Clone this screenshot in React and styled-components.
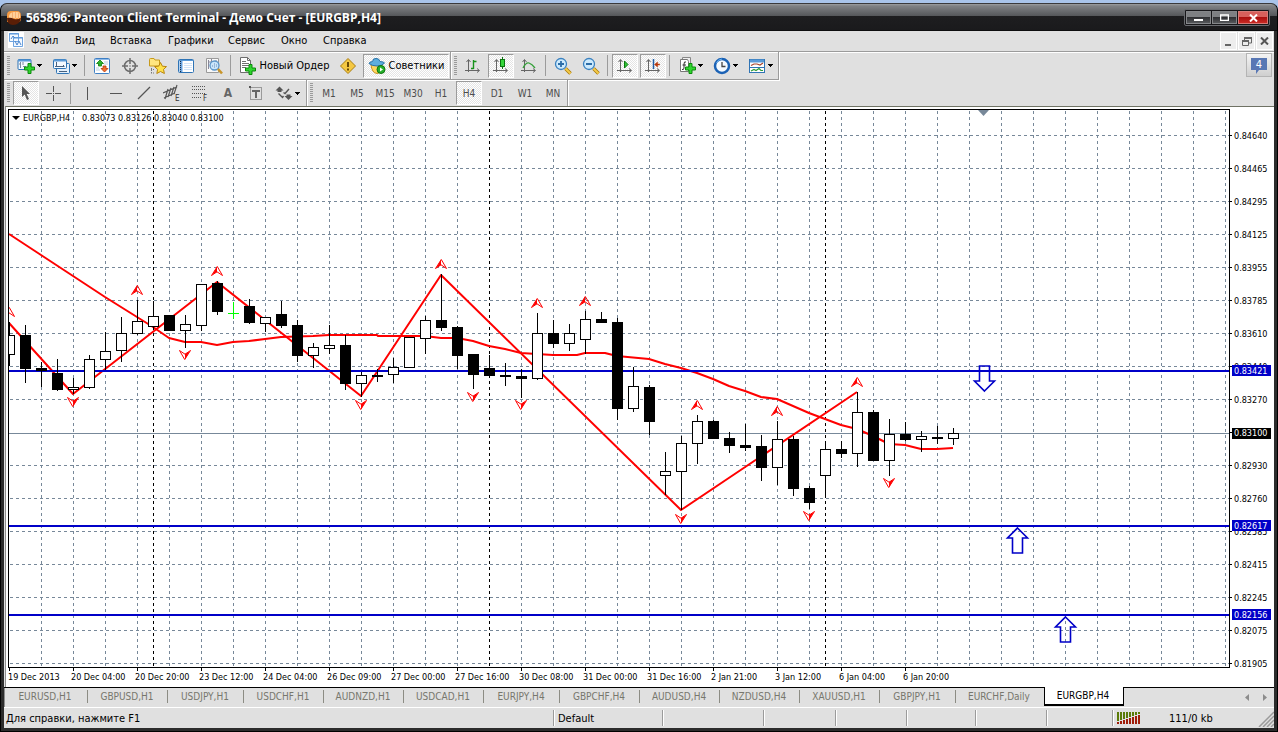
import React from "react";
import styled, { createGlobalStyle, css } from "styled-components";

const Global = createGlobalStyle`
  * { box-sizing: border-box; }
  body {
    margin: 0;
    background: #a9c4ea;
    font-family: "DejaVu Sans Condensed", "DejaVu Sans", sans-serif;
    font-size: 11px;
    color: #000;
  }
  button { font: inherit; color: inherit; padding: 0; margin: 0; border: 0; background: none; }
  svg { display: block; flex: none; }
`;

/* ---------- window frame ---------- */

const Window = styled.div`
  display: flex;
  flex-direction: column;
  min-height: 100vh;
  padding-top: 3px;
`;

const Frame = styled.div`
  flex: 1;
  display: flex;
  flex-direction: column;
  border: 1px solid #000;
  border-top-color: #3a3a3c;
  border-radius: 7px 7px 0 0;
  background: #2c2c2c;
  overflow: hidden;
`;

const TitleBar = styled.header`
  display: flex;
  align-items: center;
  height: 27px;
  padding: 0 7px 0 5px;
  gap: 4px;
  background: linear-gradient(#9c9ea0 0, #7f8184 2px, #55575a 12px, #1e1e20 12px, #1a1a1c 26px, #000 27px);
`;

const Title = styled.h1`
  flex: 1;
  margin: 0;
  font: bold 12px/16px "Open Sans", "Noto Sans", sans-serif;
  color: #fff;
  white-space: nowrap;
`;

const CaptionGroup = styled.div`
  display: flex;
  gap: 1px;
  padding: 1px;
  background: #17171a;
  border: 1px solid #6a6c70;
  border-radius: 2px;
`;

const CaptionButton = styled.button`
  display: grid;
  place-items: center;
  width: ${(p) => (p.$close ? 30 : 25)}px;
  height: 13px;
  border: 1px solid ${(p) => (p.$close ? "#d87a76" : "#85878a")};
  background: ${(p) =>
    p.$close
      ? "linear-gradient(#d8605c 0 45%, #a80d0d 45%, #c82a24)"
      : "linear-gradient(#7e8083 0 45%, #2c2d30 45%, #55575a)"};
`;

const Client = styled.div`
  flex: 1;
  display: flex;
  flex-direction: column;
  margin: 0 3px 3px;
  background: #e0e0e0;
`;

/* ---------- menu ---------- */

const MenuBar = styled.nav`
  display: flex;
  align-items: center;
  height: 20px;
  padding: 0 1px 0 4px;
`;

const MenuItem = styled.button`
  width: ${(p) => p.$w}px;
  height: 20px;
  line-height: 20px;
  text-align: left;
  white-space: nowrap;
`;

const MenuSpacer = styled.div`
  flex: 1;
`;

const ChildButton = styled.button`
  display: grid;
  place-items: center;
  width: 17px;
  height: 18px;
  margin-left: 1px;
  border: 1px solid #fff;
  background: #ededed;
`;

/* ---------- toolbars ---------- */

const ToolRow = styled.div`
  display: flex;
  justify-content: space-between;
  height: ${(p) => p.$h}px;
  ${(p) => p.$top && css`border-top: 1px solid #9b9b9b; box-shadow: inset 0 1px #fff;`}
`;

const Bars = styled.div`
  display: flex;
`;

const Bar = styled.div`
  display: flex;
  align-items: center;
  padding-right: ${(p) => p.$end}px;
  border-right: 1px solid #9b9b9b;
  border-bottom: ${(p) => (p.$line ? "1px solid #9b9b9b" : "0")};
  box-shadow: 1px 1px #fff;
`;

const Grip = styled.span`
  width: 3px;
  height: 20px;
  margin: 0 2px 0 3px;
  background: repeating-linear-gradient(#9a9a9a 0 1px, #e0e0e0 1px 2px);
`;

const Divider = styled.span`
  width: 1px;
  height: 21px;
  margin: 0 3px 0 2px;
  background: #9b9b9b;
`;

const pressed = css`
  border: 1px solid;
  border-color: #9b9b9b #fff #fff #9b9b9b;
  background: repeating-conic-gradient(#fff 0 25%, #e4e4e4 0 50%) 0 0 / 2px 2px;
`;

const ToolButton = styled.button`
  display: flex;
  align-items: center;
  justify-content: center;
  gap: ${(p) => p.$gap || 3}px;
  width: ${(p) => p.$w || 26}px;
  height: 24px;
  margin: 0 1px;
  white-space: nowrap;
  ${(p) => p.$on && pressed}
`;

const PeriodButton = styled(ToolButton)`
  font-size: 10px;
  color: #4c4c4c;
`;

const NewsButton = styled.button`
  display: grid;
  place-items: center;
  width: 26px;
  height: 24px;
  margin: 1px 2px 0 0;
  border: 1px solid #b4b4b4;
  background: linear-gradient(#f4f4f4, #cfcfcf);
`;

/* ---------- chart ---------- */

const ChartPane = styled.main`
  flex: 1;
  display: grid;
  grid-template-columns: minmax(0, 1fr) 44px;
  grid-template-rows: 559px auto;
  padding: 2px 0 0 2px;
  margin-left: 1px;
  border-top: 1px solid #6f7264;
  border-left: 1px solid #8d8d8d;
  background: #fff;
`;

const PlotSvg = styled.svg`
  width: 100%;
  height: 559px;
`;

const ScaleSvg = styled.svg`
  width: 44px;
  height: 559px;
  overflow: visible;
`;

const DateSvg = styled.svg`
  width: 100%;
  height: 19px;
  overflow: visible;
`;

/* ---------- tabs ---------- */

const TabBar = styled.div`
  display: flex;
  align-items: flex-start;
  height: 21px;
  border-top: 1px solid #000;
  border-bottom: 1px solid #fff;
  box-shadow: inset 1px 0 #8d8d8d;
`;

const Tab = styled.button`
  position: relative;
  width: ${(p) => p.$w}px;
  height: 17px;
  padding-right: 2px;
  line-height: 17px;
  font-size: 10px;
  color: #77776d;
  text-align: center;
  white-space: nowrap;
  ${(p) =>
    p.$active
      ? css`
          height: 19px;
          margin-top: -1px;
          background: #fff;
          color: #000;
          border: solid #000;
          border-width: 0 1px 2px 1px;
        `
      : css`
          background: linear-gradient(#8c8c84, #8c8c84) right center / ${p.$last ? 0 : 1}px 13px no-repeat;
        `}
`;

const TabArrows = styled.div`
  display: flex;
  gap: 12px;
  margin-left: auto;
  padding: 6px 7px 0 0;
`;

const ArrowButton = styled.button`
  display: block;
  width: 5px;
  height: 7px;
`;

/* ---------- status ---------- */

const StatusBar = styled.footer`
  display: flex;
  align-items: center;
  height: 20px;
`;

const StatusCell = styled.div`
  display: flex;
  align-items: center;
  gap: 28px;
  height: 16px;
  padding-left: ${(p) => (p.$first ? 2 : 4)}px;
  white-space: nowrap;
  ${(p) => (p.$grow ? "flex: 1;" : `width: ${p.$w}px;`)}
  ${(p) => !p.$first && css`border-left: 1px solid #9b9b9b; box-shadow: inset 1px 0 #fff;`}
`;

/* ---------- icons ---------- */

const Icon = ({ w = 18, h = 18, children }) => (
  <svg width={w} height={h} viewBox={`0 0 ${w} ${h}`} aria-hidden="true">
    {children}
  </svg>
);

const Caret = () => (
  <svg width="5" height="3" viewBox="0 0 5 3" shapeRendering="crispEdges">
    <path d="M0 0h5L2.500 3z" fill="#000" />
  </svg>
);

const Plus = ({ x, y }) => (
  <path
    transform={`translate(${x} ${y})`}
    d="M4 .5h3V4h3.500v3H7v3.500H4V7H.5V4H4z"
    fill="#2fd52f"
    stroke="#0a8a0a"
  />
);

const Axes = () => (
  <path d="M4.500 3v12M1 13.500h14M2.500 5l2-2.500 2 2.500M13 11.500l2.500 2-2.500 2" fill="none" stroke="#666" />
);

const icons = {
  app: (
    <Icon w={16} h={16}>
      <path d="M1 9V5q0-4 4-4h6q4 0 4 5v3q0 3-3 3H1z" fill="#f79a40" />
      <path d="M3 6Q4 2 8 2h3q3 0 3 3v3H3z" fill="#ffd09a" />
      <path d="M6.500 2v7M9.500 2v7M12.500 3v6" stroke="#f8b070" />
      <path d="M1 8q4-1 7 1 3 1 7-1-1 7-8 7-6 0-6-7z" fill="#5a1e06" />
    </Icon>
  ),
  doc: (
    <Icon w={16} h={16}>
      <path fill="#fff" d="M0 0h16v16H0z" />
      <path d="M1.500 1.500h9v8h-9zM5.500 5.500h9v9h-9z" fill="#f4f9ff" stroke="#6fa4e0" />
      <path d="M1 2h10M5 6h10" stroke="#5a96da" />
      <path d="M3 7l2-3 2 2M7 9l2 4 2-4 2 4" fill="none" stroke="#4a86d0" />
    </Icon>
  ),
  newChart: (
    <Icon>
      <rect x="1" y="2.500" width="13" height="10" rx="1" fill="#f4f9ff" stroke="#2f74b5" />
      <path d="M1 3.500h13" stroke="#5a9ad8" strokeWidth="2" />
      <path d="M3.500 5v6M2 7h2M6 9.500h3M6 5v3" stroke="#7a8aa0" />
      <Plus x={7} y={6} />
    </Icon>
  ),
  profiles: (
    <Icon>
      <rect x="4.500" y="6.500" width="13" height="10" rx="1" fill="#e4f0fc" stroke="#2f74b5" />
      <rect x="1.500" y="2.500" width="13" height="9" rx="1" fill="#f4f9ff" stroke="#2f74b5" />
      <path d="M2 3.500h12" stroke="#5a9ad8" strokeWidth="2" />
      <path d="M4.500 5v5M3 9.500h9M11 8l1.500 1.500M7 14.500h8" fill="none" stroke="#47617e" />
    </Icon>
  ),
  market: (
    <Icon>
      <rect x="1.500" y="1.500" width="15" height="15" rx="1" fill="#fff" stroke="#3d7fc4" />
      <path d="M2 2.500h14" stroke="#8db9e8" />
      <path d="M7 3L3.500 6.500H5.500V9h3V6.500h2z" fill="#2db52d" stroke="#0b7c0b" strokeWidth=".8" />
      <path d="M11.500 15L8 11.500h2V9h3v2.500h2z" fill="#f07030" stroke="#b83a0a" strokeWidth=".8" />
      <path d="M11 5h4M11 7h4M3 11h3M3 13h4" stroke="#b9cfe4" />
    </Icon>
  ),
  crosshair: (
    <Icon>
      <circle cx="9" cy="9" r="5.500" fill="none" stroke="#6c6c6c" strokeWidth="1.500" />
      <path d="M9 1v6M9 11v6M1 9h6M11 9h6M9 8.500v1" stroke="#6c6c6c" strokeWidth="1.500" />
    </Icon>
  ),
  navigator: (
    <Icon>
      <path d="M.5 2.500Q.5 1.500 1.500 1.500H5l1 1.500h4.500v6H.5z" fill="#ffe680" stroke="#c79a1c" />
      <path d="M2.500 11v5M2 12.500h4M2 16h4" stroke="#777" strokeDasharray="1 1" />
      <path d="M11.500 5.500l1.900 3.700 4.100.4-3 2.800.9 4.100-3.900-2-3.700 2 .8-4.100-3.100-2.800 4.200-.4z" fill="#ffe14a" stroke="#b98510" />
    </Icon>
  ),
  terminal: (
    <Icon>
      <rect x="1.500" y="2.500" width="15" height="13" rx="1" fill="#fff" stroke="#2f74b5" />
      <path d="M2 3.500h14" stroke="#5a9ad8" />
      <path d="M4 4v11" stroke="#6aa4e0" strokeWidth="3" />
      <path d="M3.500 4v11" stroke="#1c2c44" strokeDasharray="1 1" />
      <path d="M7 6.500h8M7 8.500h8M7 10.500h8M7 12.500h8" stroke="#d3e4f7" />
    </Icon>
  ),
  tester: (
    <Icon>
      <path d="M1.500 1.500h12v14h-12z" fill="#f8f8f8" stroke="#9a9a9a" />
      <path d="M3.500 3v9M3 5h3M6.500 2v4M11 3v5" stroke="#889" />
      <circle cx="9.500" cy="8.500" r="4.500" fill="#cbe6fb" stroke="#5b95c9" strokeWidth="1.300" />
      <path d="M9.500 6v5M7.500 8v2M11.500 7v3" stroke="#9ab8d8" />
      <path d="M13 12l4 4.500" stroke="#c8952a" strokeWidth="2.600" />
    </Icon>
  ),
  order: (
    <Icon>
      <path d="M2.500.5h7l3 3v12h-10z" fill="#fff" stroke="#6e6e6e" />
      <path d="M9.500.5v3h3M4 4.500h4M4 6.500h7M4 8.500h7M4 10.500h4" fill="none" stroke="#6e6e6e" />
      <Plus x={7} y={7} />
    </Icon>
  ),
  warn: (
    <Icon>
      <path d="M9 1.500L16.500 9 9 16.500 1.500 9z" fill="#f5c842" stroke="#a87c10" strokeLinejoin="round" />
      <path d="M9 5v5M9 11.500v2" stroke="#5a3c00" strokeWidth="1.800" />
    </Icon>
  ),
  advisor: (
    <Icon>
      <path d="M3 8h11q0 8-5 8.500Q4 16 3 8z" fill="#ffd65c" stroke="#c89020" />
      <path d="M1 6.500Q1 5 4.500 4.500 5 1 8 1.500q3-.5 4 3 4 .3 4.500 1.500Q14 9 9 9 4 9 1 6.500z" fill="#5eaede" stroke="#2a73a8" />
      <circle cx="13" cy="12.500" r="4" fill="#26b02a" stroke="#0c7410" />
      <path d="M12 10.500v4l3-2z" fill="#fff" />
    </Icon>
  ),
  bars: (
    <Icon>
      <Axes />
      <path d="M9.500 3v9M9.500 4.500h3M7 11.500h2.500" stroke="#16921a" strokeWidth="1.400" />
    </Icon>
  ),
  candles: (
    <Icon>
      <Axes />
      <path d="M10.500 0v12" stroke="#0c7410" />
      <rect x="8.500" y="2.500" width="4" height="7" fill="#35d63a" stroke="#0c7410" />
    </Icon>
  ),
  line: (
    <Icon>
      <Axes />
      <path d="M3 11Q6 5 9 6t6 5" fill="none" stroke="#34a038" strokeWidth="1.300" />
    </Icon>
  ),
  zoomIn: (
    <Icon>
      <path d="M11.500 11.500l5 5" stroke="#a8780c" strokeWidth="3.500" />
      <path d="M11.500 11.500l5 5" stroke="#f5cc4a" strokeWidth="2" />
      <circle cx="7" cy="7" r="5.500" fill="#cdeafd" stroke="#3b82c0" strokeWidth="1.300" />
      <path d="M7 4v6M4 7h6" stroke="#2c6da8" strokeWidth="1.800" />
    </Icon>
  ),
  zoomOut: (
    <Icon>
      <path d="M11.500 11.500l5 5" stroke="#a8780c" strokeWidth="3.500" />
      <path d="M11.500 11.500l5 5" stroke="#f5cc4a" strokeWidth="2" />
      <circle cx="7" cy="7" r="5.500" fill="#cdeafd" stroke="#3b82c0" strokeWidth="1.300" />
      <path d="M4 7h6" stroke="#2c6da8" strokeWidth="1.800" />
    </Icon>
  ),
  scroll: (
    <Icon>
      <Axes />
      <path d="M8.500 4v7l3.500-3.500z" fill="#2cc431" stroke="#0c7a10" />
    </Icon>
  ),
  shift: (
    <Icon>
      <Axes />
      <path d="M9.500 2v10" stroke="#205fa8" strokeWidth="1.500" />
      <path d="M10.500 7.500l3-2.500v2h2v1h-2v2z" fill="#b8380c" stroke="#b8380c" strokeWidth=".5" />
    </Icon>
  ),
  indicator: (
    <Icon>
      <path d="M4.500.5h8v13h-8z" fill="#eee" stroke="#888" />
      <path d="M2.500 2.500h7l1 2v10h-8z" fill="#fff" stroke="#777" />
      <path d="M8 5q-2-1-2 2v4q0 2-2 1.500M4.500 8H8" fill="none" stroke="#333" />
      <Plus x={7} y={6} />
    </Icon>
  ),
  clock: (
    <Icon>
      <circle cx="9" cy="9" r="7" fill="#f4faff" stroke="#1b62b5" strokeWidth="2.500" />
      <path d="M3.500 6A6.500 6.500 0 0 1 9 2" fill="none" stroke="#6db4f0" />
      <path d="M9 5v4.500h3.500" fill="none" stroke="#444" strokeWidth="1.300" />
    </Icon>
  ),
  template: (
    <Icon>
      <rect x="1.500" y="2.500" width="15" height="13" fill="#fff" stroke="#2f74b5" />
      <path d="M2 4h14" stroke="#5a9ad8" strokeWidth="3" />
      <path d="M2 10.500h14" stroke="#2f74b5" />
      <path d="M3 8.500l3-1.500h3l3 1 3-2" fill="none" stroke="#a8442c" strokeWidth="1.200" />
      <path d="M3 14l3-1.500 2 1 3-2 2 2h2" fill="none" stroke="#2e9c34" strokeWidth="1.200" />
    </Icon>
  ),
  cursor: (
    <Icon>
      <path d="M5 2v11l2.700-2.500L10 16l2-1-2.300-5H13z" fill="#555" />
    </Icon>
  ),
  cross: (
    <Icon>
      <path d="M8.500 2v6M8.500 11v6M1 9.500h6M10 9.500h6M8 9.500h1" stroke="#555" shapeRendering="crispEdges" />
    </Icon>
  ),
  vline: (
    <Icon>
      <path d="M8.500 3v13" stroke="#555" />
    </Icon>
  ),
  hline: (
    <Icon>
      <path d="M3 9.500h12" stroke="#555" />
    </Icon>
  ),
  trend: (
    <Icon>
      <path d="M3 15L15 3" stroke="#555" strokeWidth="1.200" />
    </Icon>
  ),
  channel: (
    <Icon>
      <path d="M0 9L14 3M1 14L12 9M2 15L5 5M5 13L8 4M8 12l3-9M11 10l3-9" stroke="#555" strokeWidth="1.200" />
      <text x="12" y="17" fontSize="8" fill="#333">E</text>
    </Icon>
  ),
  fibo: (
    <Icon>
      <path d="M1 2.500h14M1 5.500h14M1 9.500h14M1 13.500h9" stroke="#555" strokeDasharray="1 1" />
      <text x="12" y="17" fontSize="8" fill="#333">F</text>
    </Icon>
  ),
  label: (
    <Icon>
      <rect x="3.500" y="3.500" width="11" height="12" fill="none" stroke="#555" strokeDasharray="1 1" />
      <path d="M2 2h2v2H2z" fill="#555" />
      <path d="M5 7h8M9 6v8" stroke="#666" strokeWidth="2" />
    </Icon>
  ),
  arrows: (
    <Icon>
      <path d="M4.500 2.500L8.500 6.500H6.500v1.500h-4V6.500H.5z" fill="#555" />
      <path d="M13.500 16l4-4h-2v-1.500h-4V12h-2z" fill="#555" />
      <path d="M3.500 9.500l4 4 1-1.500M8.500 8.500l1.500 1 4-4.500" fill="none" stroke="#555" strokeWidth="1.400" />
    </Icon>
  ),
};

const TextIcon = styled.span`
  font: bold 12px/18px "DejaVu Sans Condensed", sans-serif;
  color: #666;
`;

/* ---------- chart data ---------- */

// x, body top, body bottom, wick top, wick bottom, filled
const candles = [
  [9, 335, 355, 322, 366, 0], [25, 335, 369, 325, 383, 1], [41, 368, 371, 362, 387, 1],
  [57, 373, 390, 359, 391, 1], [73, 387, 390, 378, 394, 0], [89, 359, 388, 355, 389, 0],
  [105, 351, 360, 332, 370, 0], [121, 333, 351, 317, 362, 0], [137, 321, 334, 300, 335, 0],
  [153, 316, 327, 301, 330, 0], [169, 315, 331, 315, 331, 1], [185, 324, 331, 315, 348, 0],
  [201, 284, 326, 284, 331, 0], [217, 283, 312, 281, 315, 1], [249, 306, 323, 299, 324, 1],
  [265, 317, 324, 317, 332, 0], [281, 314, 326, 301, 328, 1], [297, 325, 356, 320, 362, 1],
  [313, 347, 356, 343, 368, 0], [329, 345, 349, 325, 354, 0], [345, 345, 384, 335, 390, 1],
  [361, 375, 384, 372, 397, 0], [377, 375, 377, 369, 382, 1], [393, 367, 375, 358, 383, 0],
  [409, 337, 368, 337, 368, 0], [425, 320, 339, 316, 354, 0], [441, 320, 328, 274, 331, 1],
  [457, 327, 356, 326, 369, 1], [473, 354, 375, 354, 389, 1], [489, 368, 376, 355, 378, 1],
  [505, 375, 377, 363, 386, 1], [521, 376, 379, 369, 398, 1], [537, 333, 379, 313, 380, 0],
  [553, 333, 344, 320, 348, 1], [569, 333, 344, 324, 351, 0], [585, 319, 340, 311, 354, 0],
  [601, 319, 323, 312, 323, 1], [617, 322, 409, 318, 420, 1], [633, 386, 409, 367, 412, 0],
  [649, 387, 422, 385, 435, 1], [665, 471, 476, 452, 495, 0], [681, 443, 472, 436, 510, 0],
  [697, 421, 444, 415, 464, 0], [713, 421, 439, 420, 439, 1], [729, 438, 446, 432, 453, 1],
  [745, 445, 448, 424, 451, 1], [761, 446, 468, 435, 481, 1], [777, 439, 468, 421, 485, 0],
  [793, 439, 489, 436, 496, 1], [809, 488, 503, 486, 509, 1], [825, 449, 476, 443, 495, 0],
  [841, 449, 454, 441, 458, 1], [857, 412, 454, 392, 467, 0], [873, 412, 461, 410, 461, 1],
  [889, 434, 461, 419, 476, 0], [905, 434, 440, 422, 441, 1], [921, 436, 440, 431, 452, 0],
  [937, 437, 439, 426, 444, 1], [953, 433, 439, 428, 445, 0],
];

const average =
  "9,234 41,255 73,276 105,297 137,317 153,327 169,338 185,342 201,342 217,345 233,342 249,341 265,339 281,337 313,336 329,335 377,335 378,336 425,336 441,338 457,338 473,341 489,346 505,349 521,353 537,354 553,355 577,355 585,353 605,353 617,356 649,359 665,364 681,368 697,373 713,379 729,386 745,391 761,397 777,399 793,406 809,413 825,419 841,425 857,429 873,436 889,444 905,445 921,449 937,449 953,448";
const zigzag = "9,323 73,394 217,282 361,396 441,275 681,510 857,392";

const upMarks = [[9, 312], [137, 290], [217, 271], [441, 264], [537, 303], [585, 301], [697, 405], [777, 411], [857, 382]];
const downMarks = [[73, 402], [185, 355], [361, 405], [473, 397], [521, 405], [681, 519], [809, 516], [889, 483]];

const levels = [
  { y: 371, text: "0.83421" },
  { y: 526, text: "0.82617" },
  { y: 615, text: "0.82156" },
];
const prices = [
  "0.84640", "0.84465", "0.84295", "0.84125", "0.83955", "0.83785", "0.83610", "0.83440", "0.83270",
  "0.83100", "0.82930", "0.82760", "0.82585", "0.82415", "0.82245", "0.82075", "0.81905",
];
const dates = [
  "19 Dec 2013", "20 Dec 04:00", "20 Dec 20:00", "23 Dec 12:00", "24 Dec 04:00", "26 Dec 09:00",
  "27 Dec 00:00", "27 Dec 16:00", "30 Dec 08:00", "31 Dec 00:00", "31 Dec 16:00", "2 Jan 21:00",
  "3 Jan 12:00", "6 Jan 04:00", "6 Jan 20:00",
];

const gridX = Array.from({ length: 60 }, (_, i) => 41 + i * 32);
const gridY = prices.map((_, i) => 136 + i * 33);

const Candle = ({ c: [x, top, bottom, high, low, filled] }) => (
  <g>
    <path d={`M${x + 0.5} ${high}V${low}`} stroke="#000" />
    <rect
      x={x - 4.5}
      y={top + 0.5}
      width="10"
      height={bottom - top - 1}
      fill={filled ? "#000" : "#fff"}
      stroke="#000"
    />
  </g>
);

const Fractal = ({ x, y, down }) => (
  <g transform={`translate(${x} ${y}) scale(${down ? "-1 -1" : "1 1"})`} fill="none" stroke="#f00">
    <path d="M0-4.500L-4.500 3.500 0 1z" fill="#f00" stroke="none" />
    <path d="M.3-4.500L-5.500 4.500 0 .8 5.500 4.500z" />
  </g>
);

const BlockArrow = ({ x, y, down }) => (
  <path
    transform={`translate(${x} ${y}) scale(1 ${down ? -1 : 1})`}
    d="M0 0L10 10H5V25H-5V10H-10Z"
    fill="none"
    stroke="#0000c8"
    strokeWidth="1.600"
  />
);

function Plot() {
  return (
    <PlotSvg role="img" aria-label="EURGBP,H4">
      <g transform="translate(-8 -109)">
        <g shapeRendering="crispEdges" stroke="#778899" strokeDasharray="3 3">
          {gridX.map((x) => (
            <line key={x} x1={x + 0.5} x2={x + 0.5} y1="111" y2="667" />
          ))}
          {gridY.map((y) => (
            <line key={y} x1="10" x2="200%" y1={y - 0.5} y2={y - 0.5} />
          ))}
          {[153, 489, 825].map((x) => (
            <line key={x} x1={x + 0.5} x2={x + 0.5} y1="111" y2="667" stroke="#000" />
          ))}
        </g>
        <g shapeRendering="crispEdges" fill="none">
          <rect x="9" y="432" width="200%" height="3" fill="#fff" />
          <line x1="9" x2="200%" y1="433.5" y2="433.5" stroke="#778899" />
        </g>
        <g fill="none" stroke="#f00" strokeWidth="2" strokeLinejoin="round">
          <polyline points={average} />
          <polyline points={zigzag} />
        </g>
        <g shapeRendering="crispEdges" fill="none">
          {levels.map((l) => (
            <line key={l.y} x1="9" x2="200%" y1={l.y} y2={l.y} stroke="#0000c8" strokeWidth="2" />
          ))}
          {candles.map((c) => (
            <Candle key={c[0]} c={c} />
          ))}
          <path d="M233.500 302V319M228 313.500H239" stroke="#0f0" />
        </g>
        {upMarks.map(([x, y]) => (
          <Fractal key={x} x={x} y={y} />
        ))}
        {downMarks.map(([x, y]) => (
          <Fractal key={x} x={x} y={y} down />
        ))}
        <BlockArrow x={984.5} y={391} down />
        <BlockArrow x={1017.5} y={528} />
        <BlockArrow x={1065.5} y={617} />
        <path d="M978 110h11l-5.500 6z" fill="#778899" />
        <path d="M12 116h8l-4 4z" fill="#000" />
        <text x="23" y="121" fontSize="9">EURGBP,H4</text>
        <text x="82" y="121" fontSize="9">0.83073 0.83126 0.83040 0.83100</text>
      </g>
      <g shapeRendering="crispEdges" fill="#000">
        <rect width="100%" height="1" />
        <rect width="1" height="100%" />
        <rect y="558" width="100%" height="1" />
      </g>
    </PlotSvg>
  );
}

function PriceScale() {
  return (
    <ScaleSvg fontSize="9">
      <g transform="translate(0 -109)">
        <rect x="-1" y="109" width="1" height="559" />
        {prices.map((p, i) => (
          <g key={p}>
            <rect x="0" y={gridY[i] - 1} width="2" height="1" />
            <text x="4" y={gridY[i] + 3}>{p}</text>
          </g>
        ))}
        <rect x="2" y="428" width="39" height="11" />
        <text x="4" y="436" fill="#fff">0.83100</text>
        {levels.map((l) => (
          <g key={l.y}>
            <rect x="2" y={l.y - 6} width="39" height="11" fill="#0000c8" />
            <text x="4" y={l.y + 3} fill="#fff">{l.text}</text>
          </g>
        ))}
      </g>
    </ScaleSvg>
  );
}

function DateScale() {
  return (
    <DateSvg fontSize="9">
      {dates.map((d, i) => (
        <g key={d} transform={`translate(${i * 64} 0)`}>
          <rect x="1" y="0" width="1" height="3" />
          <text x={i ? -1 : 0} y="12">{d}</text>
        </g>
      ))}
    </DateSvg>
  );
}

/* ---------- content ---------- */

const menu = [["Файл", 44], ["Вид", 35], ["Вставка", 58], ["Графики", 60], ["Сервис", 53], ["Окно", 42], ["Справка", 50]];
const tabs = [
  ["EURUSD,H1", 84], ["GBPUSD,H1", 80], ["USDJPY,H1", 76], ["USDCHF,H1", 80], ["AUDNZD,H1", 80],
  ["USDCAD,H1", 80], ["EURJPY,H4", 76], ["GBPCHF,H4", 80], ["AUDUSD,H4", 80], ["NZDUSD,H4", 80],
  ["XAUUSD,H1", 80], ["GBPJPY,H1", 76], ["EURCHF,Daily", 88], ["EURGBP,H4", 80],
];
const periods = ["M1", "M5", "M15", "M30", "H1", "H4", "D1", "W1", "MN"];

const Tool = ({ icon, name, on }) => (
  <ToolButton $on={on} aria-label={name}>{icons[icon]}</ToolButton>
);
const DropTool = ({ icon, name }) => (
  <ToolButton $w={33} $gap={2} aria-label={name}>
    {icons[icon]}
    <Caret />
  </ToolButton>
);

const netBars = [0, 1, 2, 3, 4, 5, 6, 7];

export default function App() {
  return (
    <Window>
      <Global />
      <Frame>
        <TitleBar>
          {icons.app}
          <Title>565896: Panteon Client Terminal - Демо Счет - [EURGBP,H4]</Title>
          <CaptionGroup>
            <CaptionButton aria-label="Свернуть">
              <Icon w={9} h={7}><path d="M0 5h9v2H0z" fill="#fff" /></Icon>
            </CaptionButton>
            <CaptionButton aria-label="Развернуть">
              <Icon w={9} h={7}><path d="M.5 1h8v5.500h-8zM0 1h9" fill="none" stroke="#fff" strokeWidth="1.500" /></Icon>
            </CaptionButton>
            <CaptionButton $close aria-label="Закрыть">
              <Icon w={9} h={8}><path d="M1 0.500l7 7M8 .5l-7 7" stroke="#fff" strokeWidth="2" /></Icon>
            </CaptionButton>
          </CaptionGroup>
        </TitleBar>
        <Client>
          <MenuBar>
            <MenuItem as="span" $w={23}>
              <Icon w={16} h={20}><g transform="translate(0 1)">{icons.doc.props.children}</g></Icon>
            </MenuItem>
            {menu.map(([label, w]) => (
              <MenuItem key={label} $w={w}>{label}</MenuItem>
            ))}
            <MenuSpacer />
            <ChildButton aria-label="Свернуть окно">
              <Icon w={7} h={9}><path d="M0 7h6v2H0z" fill="#666" /></Icon>
            </ChildButton>
            <ChildButton aria-label="Восстановить окно">
              <Icon w={10} h={9}>
                <path d="M2.500 3V1h7v5H7M.5 4h6v4.500h-6z" fill="none" stroke="#666" />
                <path d="M2 1h8M0 4h7" stroke="#666" strokeWidth="2" />
              </Icon>
            </ChildButton>
            <ChildButton aria-label="Закрыть окно">
              <Icon w={9} h={8}><path d="M1 .5l7 7M8 .5l-7 7" stroke="#555" strokeWidth="2" /></Icon>
            </ChildButton>
          </MenuBar>

          <ToolRow $h={29} $top>
            <Bars>
              <Bar $end={0} $line>
                <Grip />
                <DropTool icon="newChart" name="Новый график" />
                <DropTool icon="profiles" name="Профили" />
                <Divider />
                <Tool icon="market" name="Обзор рынка" />
                <Tool icon="crosshair" name="Окно данных" />
                <Tool icon="navigator" name="Навигатор" />
                <Tool icon="terminal" name="Терминал" />
                <Tool icon="tester" name="Тестер" />
                <Divider />
                <ToolButton $w={98}>
                  {icons.order}
                  Новый Ордер
                </ToolButton>
                <Tool icon="warn" name="Предупреждение" />
                <ToolButton $w={86} $on>
                  {icons.advisor}
                  Советники
                </ToolButton>
              </Bar>
              <Bar $end={0} $line>
                <Grip />
                <Tool icon="bars" name="Бары" />
                <Tool icon="candles" name="Свечи" on />
                <Tool icon="line" name="Линия" />
                <Divider />
                <Tool icon="zoomIn" name="Увеличить" />
                <Tool icon="zoomOut" name="Уменьшить" />
                <Divider />
                <Tool icon="scroll" name="Автопрокрутка" on />
                <Tool icon="shift" name="Сдвиг графика" on />
                <Divider />
                <DropTool icon="indicator" name="Индикаторы" />
                <DropTool icon="clock" name="Периоды" />
                <DropTool icon="template" name="Шаблоны" />
              </Bar>
            </Bars>
            <NewsButton aria-label="Сообщения: 4">
              <Icon w={16} h={17}>
                <path d="M0 1h16v12H8l-3 4v-4H0z" fill="#5877b4" />
                <text x="8" y="11" textAnchor="middle" fontSize="11" fill="#fff">4</text>
              </Icon>
            </NewsButton>
          </ToolRow>

          <ToolRow $h={26}>
            <Bars>
              <Bar $end={1}>
                <Grip />
                <Tool icon="cursor" name="Курсор" on />
                <Tool icon="cross" name="Перекрестие" />
                <Divider />
                <Tool icon="vline" name="Вертикальная линия" />
                <Tool icon="hline" name="Горизонтальная линия" />
                <Tool icon="trend" name="Трендовая линия" />
                <Tool icon="channel" name="Канал" />
                <Tool icon="fibo" name="Фибоначчи" />
                <ToolButton aria-label="Текст"><TextIcon>A</TextIcon></ToolButton>
                <Tool icon="label" name="Метка" />
                <DropTool icon="arrows" name="Стрелки" />
              </Bar>
              <Bar $end={0}>
                <Grip />
                {periods.map((p) => (
                  <PeriodButton key={p} $on={p === "H4"}>{p}</PeriodButton>
                ))}
              </Bar>
            </Bars>
          </ToolRow>

          <ChartPane>
            <Plot />
            <PriceScale />
            <DateScale />
          </ChartPane>

          <TabBar>
            {tabs.map(([label, w], i) => (
              <Tab key={label} $w={w} $active={i === 13} $last={i === 12}>{label}</Tab>
            ))}
            <TabArrows>
              <ArrowButton aria-label="Назад"><Icon w={5} h={7}><path d="M4 0v7L0 3.500z" fill="#8c8c8c" /></Icon></ArrowButton>
              <ArrowButton aria-label="Вперед"><Icon w={5} h={7}><path d="M1 0v7l4-3.500z" fill="#8c8c8c" /></Icon></ArrowButton>
            </TabArrows>
          </TabBar>

          <StatusBar>
            <StatusCell $first $grow>Для справки, нажмите F1</StatusCell>
            <StatusCell $w={109}>Default</StatusCell>
            <StatusCell $w={101} />
            <StatusCell $w={72} />
            <StatusCell $w={71} />
            <StatusCell $w={69} />
            <StatusCell $w={71} />
            <StatusCell $w={66} />
            <StatusCell $w={146}>
              <Icon w={24} h={12}>
                {netBars.map((i) => (
                  <g key={i}>
                    <rect x={i * 3} y="0" width="2" height={9 - i} fill="#5a7a08" />
                    <rect x={i * 3} y={10 - i} width="2" height={2 + i} fill="#a01c08" />
                  </g>
                ))}
              </Icon>
              111/0 kb
            </StatusCell>
            <Icon w={16} h={18}>
              <path d="M1 18L16 3M5 18L16 7M9 18L16 11M13 18l3-3" stroke="#9b9b9b" strokeWidth="1.500" />
            </Icon>
          </StatusBar>
        </Client>
      </Frame>
    </Window>
  );
}
